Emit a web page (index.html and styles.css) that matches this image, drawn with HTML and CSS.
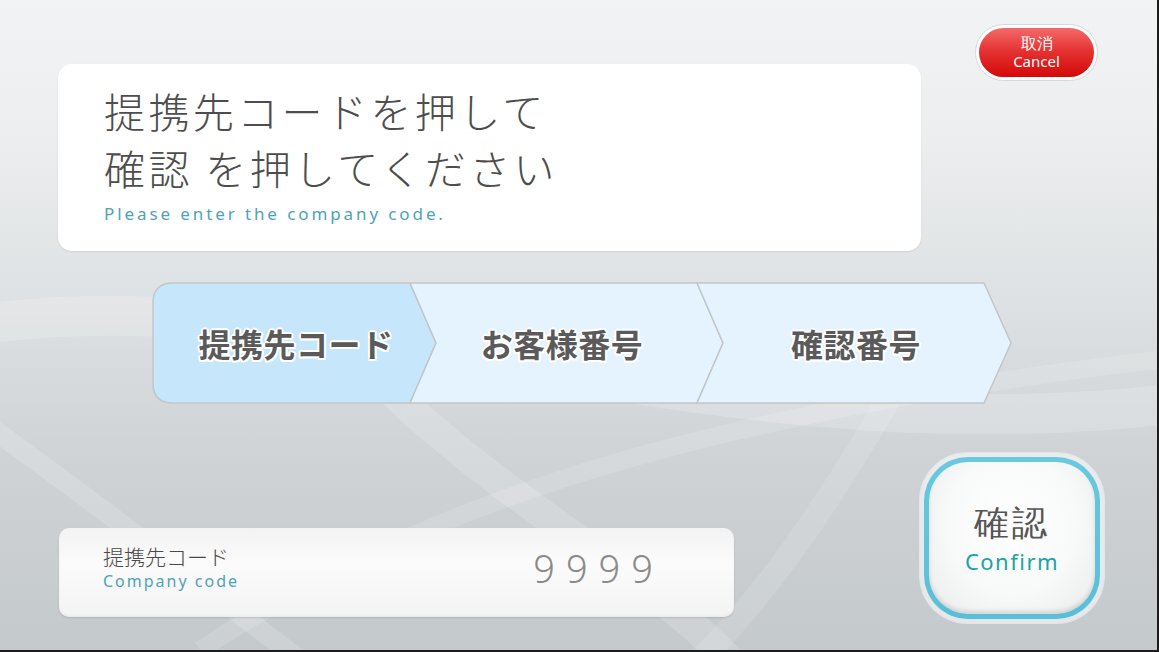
FILE: index.html
```html
<!DOCTYPE html>
<html lang="ja">
<head>
<meta charset="utf-8">
<title>提携先コード</title>
<link rel="stylesheet" href="styles.css">
</head>
<body>
<div class="screen">
  <svg class="bg" viewBox="0 0 1157 650" preserveAspectRatio="none" aria-hidden="true">
    <path d="M-50 330 C 300 260, 700 470, 1200 400" fill="none" stroke="rgba(255,255,255,0.18)" stroke-width="40"/>
    <path d="M380 380 C 520 520, 700 600, 760 700" fill="none" stroke="rgba(255,255,255,0.16)" stroke-width="30"/>
    <path d="M200 650 C 400 520, 650 420, 1157 360" fill="none" stroke="rgba(255,255,255,0.14)" stroke-width="18"/>
    <path d="M-20 420 C 120 520, 220 600, 300 660" fill="none" stroke="rgba(255,255,255,0.16)" stroke-width="20"/>
    <path d="M900 380 C 820 520, 760 600, 700 660" fill="none" stroke="rgba(255,255,255,0.12)" stroke-width="24"/>
  </svg>

  <div class="top">
    <section class="card">
      <h1 class="title">提携先コードを押して<br>確認&nbsp;を押してください</h1>
      <p class="subtitle">Please enter the company code.</p>
    </section>
    <button class="cancel" type="button">
      <span class="cancel-inner">
        <span class="cancel-ja">取消</span>
        <span class="cancel-en">Cancel</span>
      </span>
    </button>
  </div>

  <div class="steps">
    <svg class="steps-bg" viewBox="0 0 862 122" aria-hidden="true">
      <path d="M21 1 H258 L284 61 L258 121 H21 Q1 121 1 101 V21 Q1 1 21 1 Z" fill="#c6e6fb" stroke="#c3c6c8" stroke-width="1.5"/>
      <path d="M258 1 H545 L571 61 L545 121 H258 L284 61 Z" fill="#e4f3fd" stroke="#c3c6c8" stroke-width="1.5"/>
      <path d="M545 1 H832 L859 61 L832 121 H545 L571 61 Z" fill="#e4f3fd" stroke="#c3c6c8" stroke-width="1.5"/>
    </svg>
    <div class="step-labels">
      <span class="step s1">提携先コード</span>
      <span class="step s2">お客様番号</span>
      <span class="step s3">確認番号</span>
    </div>
  </div>

  <div class="bottom">
    <div class="codebox">
      <div class="code-label">
        <span class="code-ja">提携先コード</span>
        <span class="code-en">Company code</span>
      </div>
      <span class="code-value">9999</span>
    </div>
    <button class="confirm" type="button">
      <span class="confirm-ring">
        <span class="confirm-inner">
          <span class="confirm-ja">確認</span>
          <span class="confirm-en">Confirm</span>
        </span>
      </span>
    </button>
  </div>
</div>
</body>
</html>
```

FILE: styles.css
```css
* { box-sizing: border-box; }

html, body {
  margin: 0;
  padding: 0;
}

body {
  width: 1159px;
  height: 652px;
  overflow: hidden;
  font-family: "Noto Sans CJK JP", "Noto Sans", sans-serif;
}

.screen {
  position: relative;
  width: 1159px;
  height: 652px;
  padding: 24px 0 0 58px;
  border-right: 2px solid #1c1c1c;
  border-bottom: 2px solid #1c1c1c;
  background: linear-gradient(180deg, #f2f3f4 0%, #eceeef 20%, #dfe2e4 45%, #cfd3d6 70%, #c4c9cc 100%);
  overflow: hidden;
}

.bg {
  position: absolute;
  left: 0;
  top: 0;
  width: 1157px;
  height: 650px;
}

.top {
  position: relative;
  display: flex;
  align-items: flex-start;
}

.card {
  width: 863px;
  height: 187px;
  margin-top: 40px;
  padding: 18px 0 0 46px;
  background: #ffffff;
  border-radius: 14px;
  box-shadow: 0 1px 2px rgba(0,0,0,0.08);
}

.title {
  margin: 0;
  font-size: 41px;
  font-weight: 300;
  line-height: 57px;
  letter-spacing: 3.4px;
  color: #4d4d4d;
}

.subtitle {
  margin: 6px 0 0 0;
  font-family: "Noto Sans", sans-serif;
  font-size: 17px;
  font-weight: 400;
  letter-spacing: 2.9px;
  color: #4ea3b8;
}

.cancel {
  margin: 0 0 0 54px;
  padding: 3px;
  width: 123px;
  height: 57px;
  border: 1px solid #d8d8d8;
  border-radius: 29px;
  background: #ffffff;
  cursor: pointer;
}

.cancel-inner {
  display: flex;
  flex-direction: column;
  align-items: center;
  justify-content: center;
  width: 100%;
  height: 100%;
  border-radius: 26px;
  background: linear-gradient(180deg, #f36a6a 0%, #e63434 45%, #d40808 100%);
  color: #ffffff;
  line-height: 1;
}

.cancel-ja {
  font-size: 16px;
  font-weight: 400;
}

.cancel-en {
  margin-top: 2px;
  font-family: "Noto Sans", sans-serif;
  font-size: 15px;
}

.steps {
  position: relative;
  width: 862px;
  height: 122px;
  margin: 31px 0 0 94px;
}

.steps-bg {
  position: absolute;
  left: 0;
  top: 0;
  width: 862px;
  height: 122px;
}

.step-labels {
  position: relative;
  display: flex;
  height: 122px;
  align-items: center;
}

.step {
  font-size: 32px;
  font-weight: 700;
  color: #5a5a5a;
  text-align: center;
  letter-spacing: 0.5px;
  text-shadow:
    2px 0 0 #fff, -2px 0 0 #fff, 0 2px 0 #fff, 0 -2px 0 #fff,
    1.5px 1.5px 0 #fff, -1.5px 1.5px 0 #fff, 1.5px -1.5px 0 #fff, -1.5px -1.5px 0 #fff;
}

.s1 { width: 288px; }
.s2 { width: 244px; }
.s3 { width: 330px; padding-left: 14px; }

.bottom {
  position: relative;
  display: flex;
  align-items: flex-start;
  margin-top: 48px;
}

.codebox {
  display: flex;
  align-items: center;
  justify-content: space-between;
  width: 675px;
  height: 89px;
  margin-top: 76px;
  margin-left: 1px;
  padding: 0 70px 10px 44px;
  border-radius: 10px;
  background: linear-gradient(180deg, #f3f3f3 0%, #fbfbfb 40%, #f4f4f4 100%);
  box-shadow: 0 1px 2px rgba(0,0,0,0.12), inset 0 -2px 3px rgba(0,0,0,0.04);
}

.code-label {
  display: flex;
  flex-direction: column;
  line-height: 1;
}

.code-ja {
  font-size: 21px;
  font-weight: 300;
  color: #4a4a4a;
}

.code-en {
  margin-top: 6px;
  font-family: "Noto Sans", sans-serif;
  font-size: 16px;
  letter-spacing: 2px;
  color: #4ea3b8;
}

.code-value {
  font-family: "Noto Sans", sans-serif;
  font-size: 38px;
  font-weight: 300;
  letter-spacing: 11px;
  color: #8a8a8a;
  line-height: 1;
}

.confirm {
  margin: 0 0 0 185px;
  padding: 4px;
  width: 186px;
  height: 172px;
  border: 1px solid #e2e6e8;
  border-radius: 48px;
  background: rgba(255,255,255,0.55);
  cursor: pointer;
}

.confirm-ring {
  display: block;
  width: 100%;
  height: 100%;
  padding: 5px;
  border-radius: 44px;
  background: linear-gradient(180deg, #68c9df 0%, #58bfd8 100%);
}

.confirm-inner {
  display: flex;
  flex-direction: column;
  align-items: center;
  justify-content: center;
  width: 100%;
  height: 100%;
  border-radius: 39px;
  background: radial-gradient(ellipse at 50% 40%, #ffffff 0%, #f8f9f9 55%, #e9ecec 100%);
  box-shadow: inset 0 -3px 4px rgba(0,0,0,0.12);
  line-height: 1;
}

.confirm-ja {
  font-size: 35px;
  font-weight: 300;
  letter-spacing: 3px;
  color: #555555;
}

.confirm-en {
  margin-top: 10px;
  font-family: "Noto Sans", sans-serif;
  font-size: 22px;
  letter-spacing: 1.5px;
  color: #1ea3a6;
}
```
